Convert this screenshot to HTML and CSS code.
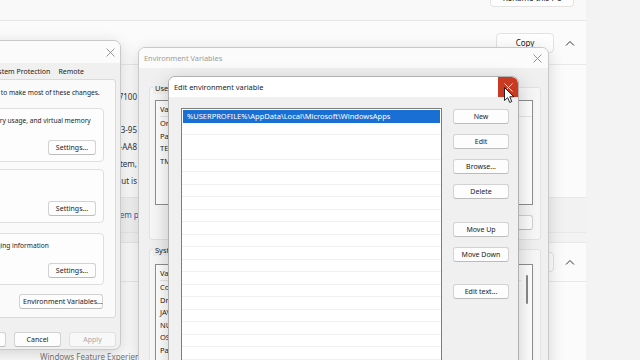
FILE: index.html
```html
<!DOCTYPE html>
<html lang="en">

<head>
  <meta charset="UTF-8">
  <title>Environment Variables</title>
  <link rel="stylesheet" href="styles.css">
</head>

<body>
  <!-- Settings > System > About, behind the dialogs -->
  <div class="settings">
    <div class="top-row">
      <button class="s-btn rename">Rename this PC</button>
    </div>

    <div class="card head">
      <span class="card-title">Device specifications</span>
      <button class="s-btn copy">Copy</button>
      <svg class="chev" width="10" height="6" viewBox="0 0 10 6"><path d="M1 5.5 L5 1.5 L9 5.5" fill="none" stroke="#333" stroke-width="1"/></svg>
    </div>
    <div class="card specs">
      <div class="spec"><span class="k">Device name</span><span class="v">DESKTOP</span></div>
      <div class="spec"><span class="k">Processor</span><span class="v long">Intel(R) Core(TM) i3-7100</span></div>
      <div class="spec"><span class="k">Installed RAM</span><span class="v">8.00 GB</span></div>
      <div class="spec"><span class="k">Device ID</span><span class="v long">4F2C1A7B-0D13-95</span></div>
      <div class="spec"><span class="k">Product ID</span><span class="v long">00330-80000-00000-AA8</span></div>
      <div class="spec"><span class="k">System type</span><span class="v long">64-bit operating system,</span></div>
      <div class="spec"><span class="k">Pen and touch</span><span class="v long">No pen or touch input is</span></div>
    </div>
    <div class="card links">
      <a class="link">Domain or workgroup</a>
      <a class="link">System protection</a>
      <a class="link">Advanced system settings</a>
    </div>

    <div class="card head second">
      <span class="card-title">Windows specifications</span>
      <button class="s-btn copy">Copy</button>
      <svg class="chev" width="10" height="6" viewBox="0 0 10 6"><path d="M1 5.5 L5 1.5 L9 5.5" fill="none" stroke="#333" stroke-width="1"/></svg>
    </div>
    <div class="card specs lower">
      <div class="spec"><span class="k">Edition</span><span class="v">Windows 11 Pro</span></div>
      <div class="spec"><span class="k">Version</span><span class="v">22H2</span></div>
      <div class="spec"><span class="k">Installed on</span><span class="v">1/5/2023</span></div>
      <div class="spec"><span class="k">OS build</span><span class="v">22621.1105</span></div>
      <div class="foot-text">Windows Feature Experience Pack</div>
    </div>
  </div>

  <!-- System Properties -->
  <div class="win sysprop">
    <div class="titlebar">
      <span class="title">System Properties</span>
      <svg class="x-icon" width="9" height="9" viewBox="0 0 9 9"><path d="M0.5 0.5 L8.5 8.5 M8.5 0.5 L0.5 8.5" stroke="#8a8a8a" stroke-width="0.9"/></svg>
    </div>
    <div class="tabs">
      <span class="tab">Computer Name</span>
      <span class="tab">Hardware</span>
      <span class="tab active">Advanced</span>
      <span class="tab">System Protection</span>
      <span class="tab">Remote</span>
    </div>
    <div class="tab-panel">
      <p class="note">You must be logged on as an Administrator to make most of these changes.</p>
      <div class="grp">
        <p>Visual effects, processor scheduling, memory usage, and virtual memory</p>
        <div class="grp-foot"><button class="w-btn">Settings...</button></div>
      </div>
      <div class="grp g2">
        <p>Desktop settings related to your sign-in</p>
        <div class="grp-foot"><button class="w-btn">Settings...</button></div>
      </div>
      <div class="grp g3">
        <p>System startup, system failure, and debugging information</p>
        <div class="grp-foot"><button class="w-btn">Settings...</button></div>
      </div>
      <div class="panel-foot"><button class="w-btn wide">Environment Variables...</button></div>
    </div>
    <div class="dlg-foot">
      <button class="w-btn">OK</button>
      <button class="w-btn">Cancel</button>
      <button class="w-btn" disabled>Apply</button>
    </div>
  </div>

  <!-- Environment Variables -->
  <div class="win envvars">
    <div class="titlebar">
      <span class="title dim">Environment Variables</span>
      <svg class="x-icon" width="9" height="9" viewBox="0 0 9 9"><path d="M0.5 0.5 L8.5 8.5 M8.5 0.5 L0.5 8.5" stroke="#8a8a8a" stroke-width="0.9"/></svg>
    </div>
    <div class="env-body">
      <div class="env-sec">
        <span class="lbl">User variables for user</span>
        <div class="lv user">
          <div class="lv-main">
            <div class="lv-hd"><span>Variable</span><span>Value</span></div>
            <div class="lv-row"><span>OneDrive</span><span>C:\Users\user\OneDrive</span></div>
            <div class="lv-row"><span>Path</span><span>C:\Users\user\AppData\Local\Microsoft\WindowsApps;</span></div>
            <div class="lv-row"><span>TEMP</span><span>C:\Users\user\AppData\Local\Temp</span></div>
            <div class="lv-row"><span>TMP</span><span>C:\Users\user\AppData\Local\Temp</span></div>
          </div>
        </div>
        <div class="btn-row">
          <button class="w-btn">New...</button>
          <button class="w-btn">Edit...</button>
          <button class="w-btn">Delete</button>
        </div>
      </div>
      <div class="env-sec">
        <span class="lbl">System variables</span>
        <div class="lv sys">
          <div class="lv-main">
            <div class="lv-hd"><span>Variable</span><span>Value</span></div>
            <div class="lv-row"><span>ComSpec</span><span>C:\Windows\system32\cmd.exe</span></div>
            <div class="lv-row"><span>DriverData</span><span>C:\Windows\System32\Drivers\DriverData</span></div>
            <div class="lv-row"><span>JAVA_HOME</span><span>C:\Program Files\Java\jdk-17</span></div>
            <div class="lv-row"><span>NUMBER_OF_PROCESSORS</span><span>4</span></div>
            <div class="lv-row"><span>OS</span><span>Windows_NT</span></div>
            <div class="lv-row"><span>Path</span><span>C:\Windows\system32;C:\Windows;</span></div>
            <div class="lv-row"><span>PATHEXT</span><span>.COM;.EXE;.BAT;.CMD;.VBS</span></div>
          </div>
          <div class="sb"><div class="sb-thumb"></div></div>
        </div>
      </div>
    </div>
  </div>

  <!-- Edit environment variable -->
  <div class="win editvar">
    <div class="titlebar">
      <span class="title">Edit environment variable</span>
      <span class="close-btn">
        <svg width="9" height="9" viewBox="0 0 9 9"><path d="M0.5 0.5 L8.5 8.5 M8.5 0.5 L0.5 8.5" stroke="#fff" stroke-width="0.9"/></svg>
      </span>
    </div>
    <div class="edit-body">
      <div class="path-list">
        <div class="path-row selected">%USERPROFILE%\AppData\Local\Microsoft\WindowsApps</div>
      </div>
      <div class="side-btns">
        <button class="w-btn">New</button>
        <button class="w-btn">Edit</button>
        <button class="w-btn">Browse...</button>
        <button class="w-btn">Delete</button>
        <button class="w-btn sep-1">Move Up</button>
        <button class="w-btn">Move Down</button>
        <button class="w-btn sep-2">Edit text...</button>
      </div>
    </div>
  </div>

  <svg class="cursor" width="11" height="17" viewBox="0 0 11 17">
    <path d="M0.5 0.5 L0.5 13.5 L3.6 10.6 L5.7 15.4 L7.8 14.5 L5.8 9.8 L9.8 9.8 Z" fill="#fff" stroke="#111" stroke-width="0.9" stroke-linejoin="round"/>
  </svg>
</body>

</html>
```

FILE: styles.css
```css
* {
  box-sizing: border-box;
}

html,
body {
  margin: 0;
  padding: 0;
}

body {
  width: 640px;
  height: 360px;
  overflow: hidden;
  position: relative;
  background: #f3f3f3;
  font-family: 'Noto Sans', 'Open Sans', sans-serif;
  color: #1c1c1c;
}

button {
  font-family: inherit;
}

/* ---------- settings page ---------- */

.settings {
  width: 596px;
  margin: -14px 0 0 -10px;
  display: flex;
  flex-direction: column;
  font-size: 8px;
}

.top-row {
  height: 35px;
  display: flex;
  justify-content: flex-end;
  align-items: flex-end;
  padding: 0 12px 13px 0;
  background: #f9f9f9;
  border-bottom: 1px solid #e6e6e6;
}

.s-btn {
  height: 20px;
  background: #fefefe;
  border: 1px solid #e2e2e2;
  border-radius: 4px;
  font-size: 8px;
  color: #222;
}

.rename {
  width: 84px;
}

.card {
  background: #fbfbfb;
  border-bottom: 1px solid #e8e8e8;
}

.head {
  height: 44px;
  display: flex;
  align-items: center;
  padding: 0 11px 0 40px;
}

.head.second {
  height: 40px;
  margin-top: 9px;
  border-top: 1px solid #e8e8e8;
}

.card-title {
  flex: 1;
  padding-top: 14px;
}

.copy {
  width: 58px;
  margin-right: 11px;
}

.specs {
  padding: 6px 0 8px;
}

.spec {
  width: 147px;
  height: 16.8px;
  display: flex;
  align-items: center;
  padding-left: 30px;
  white-space: nowrap;
  color: #333;
}

.spec .k {
  width: 60px;
  flex-shrink: 0;
}

.spec .v {
  flex: 1;
  min-width: 0;
}

.spec .v.long {
  display: flex;
  justify-content: flex-end;
}

.lower {
  padding-bottom: 0;
}

.lower .spec {
  padding-left: 0;
}

.foot-text {
  margin: -3px 0 0 50px;
  line-height: 10px;
  white-space: nowrap;
  color: #777;
}

.links {
  height: 35px;
  display: flex;
  align-items: center;
  gap: 14px;
  padding-left: 17px;
  background: #f2f2f2;
}

.link {
  color: #2a62b5;
  white-space: nowrap;
}

/* ---------- windows ---------- */

.win {
  position: absolute;
  display: flex;
  flex-direction: column;
  background: #f0f0f0;
  border: 1px solid #c9c9c9;
  border-radius: 7px 7px 0 0;
  box-shadow: 0 4px 16px rgba(0, 0, 0, 0.16);
  font-size: 7px;
  overflow: hidden;
}

.titlebar {
  display: flex;
  align-items: center;
  background: #fbfbfb;
  flex-shrink: 0;
}

.title {
  flex: 1;
  padding-left: 5px;
  font-size: 7.4px;
}

.title.dim {
  color: #9c9c9c;
}

.x-icon {
  margin-right: 6px;
}

.w-btn {
  height: 15px;
  padding: 0 3px;
  background: #fdfdfd;
  border: 1px solid #d2d2d2;
  border-bottom-color: #bcbcbc;
  border-radius: 3px;
  font-size: 7px;
  color: #1c1c1c;
  white-space: nowrap;
}

.w-btn:disabled {
  color: #a8a8a8;
  background: #f8f8f8;
  border-color: #e0e0e0;
}

/* system properties */

.sysprop {
  left: -164px;
  top: 40px;
  width: 285px;
  height: 310px;
  border-radius: 7px;
}

.sysprop .titlebar {
  height: 22px;
}

.sysprop .x-icon {
  margin-right: 5px;
}

.tabs {
  height: 16px;
  display: flex;
  justify-content: flex-end;
  align-items: center;
  padding-right: 32px;
}

.tab {
  padding: 0 4px;
}

.tab-panel {
  height: 239px;
  margin: 0 4px 0 8px;
  padding: 7px 11px 0;
  background: #fafafa;
  border: 1px solid #dadada;
  border-radius: 3px;
}

.tab-panel p {
  margin: 0;
  line-height: 12px;
  white-space: nowrap;
  font-size: 6.6px;
}

.tab-panel .note {
  margin-left: 8px;
}

.grp {
  margin-top: 9px;
  padding: 6px 7px 6px 8px;
  background: #fdfdfd;
  border: 1px solid #dedede;
  border-radius: 4px;
}

.grp.g2 {
  margin-top: 7px;
}

.grp.g3 {
  margin-top: 10px;
}

.grp-foot {
  display: flex;
  justify-content: flex-end;
  margin-top: 13px;
}

.grp.g3 .grp-foot {
  margin-top: 11px;
}

.grp-foot .w-btn {
  width: 48px;
}

.panel-foot {
  display: flex;
  justify-content: flex-end;
  margin-top: 9px;
  padding-right: 1px;
}

.w-btn.wide {
  width: 84px;
}

.dlg-foot {
  display: flex;
  justify-content: flex-end;
  gap: 8px;
  padding: 14px 4px 0 0;
}

.dlg-foot .w-btn {
  width: 47px;
}

/* environment variables */

.envvars {
  left: 138px;
  top: 47px;
  width: 411px;
  height: 330px;
}

.envvars .titlebar {
  height: 20px;
}

.env-body {
  padding: 19px 7px 0 10px;
}

.env-sec {
  padding: 0 7px 9px 5px;
  background: #f7f7f7;
  border: 1px solid #e2e2e2;
  border-radius: 3px;
}

.env-sec + .env-sec {
  margin-top: 9px;
}

.lbl {
  display: inline-block;
  margin: -6px 0 0 -2px;
  padding: 0 2px;
  line-height: 12px;
  background: #f0f0f0;
  vertical-align: top;
  font-size: 7.5px;
}

.lv {
  display: flex;
  margin-top: 3px;
  background: #fff;
  border: 1px solid #8e8e8e;
  font-size: 7.5px;
}

.lv.user {
  height: 105px;
}

.lv.sys {
  height: 140px;
  margin-top: 5px;
}

.lv-main {
  flex: 1;
  padding-left: 4px;
}

.lv-hd,
.lv-row {
  display: flex;
  white-space: nowrap;
}

.lv-hd {
  height: 16px;
  align-items: center;
  border-bottom: 1px solid #e8e8e8;
}

.lv-row {
  height: 12.5px;
  align-items: center;
}

.lv-hd span:first-child,
.lv-row span:first-child {
  width: 110px;
}

.sb {
  width: 11px;
  display: flex;
  justify-content: center;
}

.sb-thumb {
  width: 2px;
  height: 29px;
  margin-top: 10px;
  background: #8a8a8a;
  border-radius: 1px;
}

.btn-row {
  display: flex;
  justify-content: flex-end;
  gap: 7px;
  margin-top: 10px;
}

.btn-row .w-btn {
  width: 56px;
}

/* edit environment variable */

.editvar {
  left: 168px;
  top: 76px;
  width: 351px;
  height: 300px;
  border-color: #b0b0b0;
  box-shadow: 0 6px 20px rgba(0, 0, 0, 0.22);
}

.editvar .titlebar {
  height: 20px;
  background: #fff;
}

.close-btn {
  width: 20px;
  height: 20px;
  display: flex;
  justify-content: center;
  align-items: center;
  background: #c93a22;
  border-radius: 0 6px 0 0;
}

.edit-body {
  flex: 1;
  display: flex;
  align-items: flex-start;
  padding: 11px 9px 0 12px;
}

.path-list {
  width: 261px;
  height: 280px;
  padding: 1px;
  background-color: #fff;
  background-image: repeating-linear-gradient(to bottom, transparent 0, transparent 11.5px, #f0f0f0 11.5px, #f0f0f0 12.5px);
  background-origin: content-box;
  border: 1px solid #7d7d7d;
  font-size: 7.5px;
}

.path-row {
  height: 12.5px;
  line-height: 12.5px;
  padding-left: 4px;
  white-space: nowrap;
}

.path-row.selected {
  background: #1a6fd4;
  color: #fff;
}

.side-btns {
  display: flex;
  flex-direction: column;
  gap: 10px;
  margin: 1px 0 0 11px;
}

.side-btns .w-btn {
  width: 56px;
}

.side-btns .sep-1 {
  margin-top: 13px;
}

.side-btns .sep-2 {
  margin-top: 12px;
}

.cursor {
  position: absolute;
  left: 504px;
  top: 87px;
}
```
